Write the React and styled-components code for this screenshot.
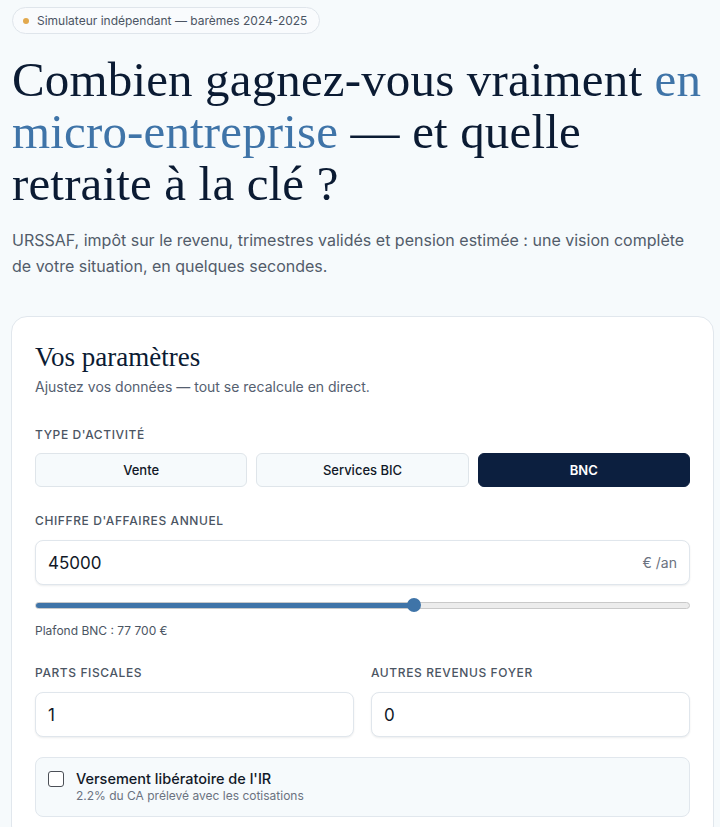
import React, { useState } from 'react';
import styled, { createGlobalStyle } from 'styled-components';

const GlobalStyle = createGlobalStyle`
  html, body {
    margin: 0;
    padding: 0;
    background: #f6fafc;
  }
  body {
    font-family: 'Inter', 'Liberation Sans', sans-serif;
    color: #0b1b33;
    -webkit-font-smoothing: antialiased;
  }
  * {
    box-sizing: border-box;
  }
`;

const Page = styled.main`
  padding: 7px 6px 40px 12px;
`;

const Badge = styled.div`
  display: inline-flex;
  align-items: center;
  gap: 8px;
  height: 27px;
  padding: 0 12px 0 10px;
  border: 1px solid #dfe5eb;
  border-radius: 999px;
  background: #f9fbfd;
  font-size: 12px;
  color: #4b5563;
`;

const Dot = styled.span`
  width: 6px;
  height: 6px;
  border-radius: 50%;
  background: #e2a94e;
`;

const Title = styled.h1`
  margin: 20px 0 0;
  font-family: 'Liberation Serif', 'Times New Roman', serif;
  font-weight: 400;
  font-size: 49px;
  line-height: 52px;
  letter-spacing: 0.15px;
  color: #0b1b33;
`;

const Accent = styled.span`
  color: #3f74a8;
`;

const Lead = styled.p`
  margin: 17px 0 0;
  font-size: 16px;
  line-height: 26px;
  color: #525c6a;
  max-width: 690px;
`;

const Card = styled.section`
  margin-top: 37px;
  margin-left: -1px;
  background: #fff;
  border: 1px solid #e1e7ed;
  border-radius: 16px;
  padding: 25px 23px 24px;
`;

const CardTitle = styled.h2`
  margin: 0;
  font-family: 'Liberation Serif', 'Times New Roman', serif;
  font-weight: 400;
  font-size: 27px;
  line-height: 30px;
  color: #0b1b33;
`;

const CardSub = styled.p`
  margin: 5px 0 0;
  font-size: 14px;
  line-height: 20px;
  color: #556070;
`;

const Field = styled.div`
  margin-top: ${(p) => p.$top || 28}px;
`;

const Label = styled.div`
  font-size: 12px;
  line-height: 16px;
  font-weight: 500;
  letter-spacing: 0.6px;
  text-transform: uppercase;
  color: #4b5563;
  margin-bottom: ${(p) => p.$gap || 11}px;
`;

const Segmented = styled.div`
  display: grid;
  grid-template-columns: repeat(3, 1fr);
  gap: 9px;
`;

const SegButton = styled.button`
  height: 34px;
  border-radius: 6px;
  border: 1px solid ${(p) => (p.$active ? '#0c1f3f' : '#dfe5ea')};
  background: ${(p) => (p.$active ? '#0c1f3f' : '#f6fafc')};
  color: ${(p) => (p.$active ? '#ffffff' : '#111827')};
  font-family: inherit;
  font-size: 13px;
  font-weight: ${(p) => (p.$active ? 600 : 500)};
  cursor: pointer;
`;

const InputBox = styled.div`
  display: flex;
  align-items: center;
  height: 45px;
  padding: 0 12px;
  background: #fff;
  border: 1px solid #e0e6ec;
  border-radius: 8px;
  box-shadow: 0 1px 2px rgba(15, 23, 42, 0.08);
`;

const Input = styled.input`
  flex: 1;
  min-width: 0;
  border: none;
  outline: none;
  background: transparent;
  font-family: inherit;
  font-size: 17px;
  color: #111827;
  padding: 0;
`;

const Suffix = styled.span`
  font-size: 14px;
  color: #6b7280;
`;

const Slider = styled.div`
  position: relative;
  margin-top: 13px;
  height: 14px;
  display: flex;
  align-items: center;
`;

const Track = styled.div`
  position: relative;
  width: 100%;
  height: 7px;
  border-radius: 4px;
  background: #ececec;
  border: 1px solid #c9c9c9;
  overflow: hidden;
`;

const Fill = styled.div`
  height: 100%;
  background: #3f74a8;
`;

const Thumb = styled.div`
  position: absolute;
  top: 0;
  width: 14px;
  height: 14px;
  margin-left: -7px;
  border-radius: 50%;
  background: #3f74a8;
`;

const Hint = styled.div`
  margin-top: 11px;
  font-size: 12px;
  color: #4b5563;
`;

const Columns = styled.div`
  display: grid;
  grid-template-columns: 1fr 1fr;
  gap: 17px;
  margin-top: 27px;
`;

const Option = styled.label`
  display: flex;
  align-items: flex-start;
  gap: 12px;
  margin-top: 20px;
  padding: 11px 12px 12px;
  background: #f6fafc;
  border: 1px solid #e1e7ed;
  border-radius: 8px;
  cursor: pointer;
`;

const Check = styled.input`
  appearance: none;
  width: 16px;
  height: 16px;
  margin: 2px 0 0;
  border: 1.5px solid #4b4f56;
  border-radius: 3px;
  background: #fff;
`;

const OptionTitle = styled.div`
  font-size: 14.5px;
  font-weight: 500;
  line-height: 19px;
  color: #111827;
`;

const OptionSub = styled.div`
  font-size: 12px;
  line-height: 16px;
  color: #6b7280;
`;

const types = ['Vente', 'Services BIC', 'BNC'];
const plafond = 77700;

export default function App() {
  const [type, setType] = useState('BNC');
  const [ca, setCa] = useState('45000');
  const [parts, setParts] = useState('1');
  const [autres, setAutres] = useState('0');
  const pct = Math.min(100, (Number(ca) / plafond) * 100);

  return (
    <>
      <GlobalStyle />
      <Page>
        <Badge>
          <Dot />
          Simulateur indépendant — barèmes 2024-2025
        </Badge>
        <Title>
          Combien gagnez-vous vraiment <Accent>en micro-entreprise</Accent> — et quelle retraite à la clé ?
        </Title>
        <Lead>
          URSSAF, impôt sur le revenu, trimestres validés et pension estimée : une vision complète de votre situation, en quelques secondes.
        </Lead>

        <Card>
          <CardTitle>Vos paramètres</CardTitle>
          <CardSub>Ajustez vos données — tout se recalcule en direct.</CardSub>

          <Field $top={30}>
            <Label $gap={10}>Type d'activité</Label>
            <Segmented>
              {types.map((t) => (
                <SegButton key={t} $active={t === type} onClick={() => setType(t)}>
                  {t}
                </SegButton>
              ))}
            </Segmented>
          </Field>

          <Field $top={26}>
            <Label>Chiffre d'affaires annuel</Label>
            <InputBox>
              <Input value={ca} onChange={(e) => setCa(e.target.value)} />
              <Suffix>€ /an</Suffix>
            </InputBox>
            <Slider>
              <Track>
                <Fill style={{ width: `${pct}%` }} />
              </Track>
              <Thumb style={{ left: `${pct}%` }} />
            </Slider>
            <Hint>Plafond BNC : 77 700 €</Hint>
          </Field>

          <Columns>
            <div>
              <Label>Parts fiscales</Label>
              <InputBox>
                <Input value={parts} onChange={(e) => setParts(e.target.value)} />
              </InputBox>
            </div>
            <div>
              <Label>Autres revenus foyer</Label>
              <InputBox>
                <Input value={autres} onChange={(e) => setAutres(e.target.value)} />
              </InputBox>
            </div>
          </Columns>

          <Option>
            <Check type="checkbox" />
            <div>
              <OptionTitle>Versement libératoire de l'IR</OptionTitle>
              <OptionSub>2.2% du CA prélevé avec les cotisations</OptionSub>
            </div>
          </Option>
        </Card>
      </Page>
    </>
  );
}
